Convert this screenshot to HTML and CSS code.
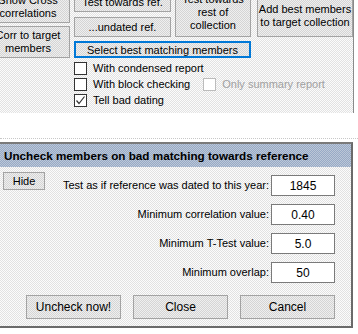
FILE: index.html
```html
<!DOCTYPE html>
<html lang="en">

<head>
    <meta charset="UTF-8">
    <title>Uncheck members</title>
    <link rel="stylesheet" href="styles.css">
</head>

<body>
<div class="top">
  <div class="colA">
    <button class="btn bCross">Show Cross<br>correlations</button>
    <button class="btn bCorr">Corr to target<br>members</button>
  </div>

  <div class="colB">
    <div class="rowB">
      <div class="stack">
        <button class="btn bRef">Test towards ref.</button>
        <button class="btn bUndated">...undated ref.</button>
      </div>
      <button class="btn bRest">Test towards<br>rest of<br>collection</button>
    </div>
    <button class="btn bSelect">Select best matching members</button>
    <label class="chk"><span class="box"></span>With condensed report</label>
    <div class="chkRow">
      <label class="chk"><span class="box"></span>With block checking</label>
      <label class="chk disabled"><span class="box"></span>Only summary report</label>
    </div>
    <label class="chk"><span class="box"><svg width="11" height="11" viewBox="0 0 11 11"><path d="M1.5 5.5 L4 8.5 L9.5 1.5" fill="none" stroke="#333" stroke-width="1.2"/></svg></span>Tell bad dating</label>
  </div>

  <div class="colC">
    <button class="btn bAdd">Add best members<br>to target collection</button>
  </div>
</div>

<div class="gap"></div>

<div class="dialog">
  <div class="titleBar">Uncheck members on bad matching towards reference</div>
  <div class="body">
    <div class="form">
      <button class="btn bHide">Hide</button>
      <span class="lbl">Test as if reference was dated to this year:</span>
      <input class="val" value="1845">

      <span></span>
      <span class="lbl">Minimum correlation value:</span>
      <input class="val" value="0.40">

      <span></span>
      <span class="lbl">Minimum T-Test value:</span>
      <input class="val" value="5.0">

      <span></span>
      <span class="lbl">Minimum overlap:</span>
      <input class="val" value="50">
    </div>

    <div class="actions">
      <button class="btn">Uncheck now!</button>
      <button class="btn">Close</button>
      <button class="btn">Cancel</button>
    </div>
  </div>
</div>
</body>
</html>
```

FILE: styles.css
```css
body {
    margin: 0;
    background: #fff;
    font-family: "Liberation Sans", Arial, sans-serif;
    font-size: 11px;
    color: #000;
    width: 358px;
    height: 334px;
    overflow: hidden;
}

/* windows style dither */
.top,
.body {
    background: repeating-conic-gradient(#e2e2e2 0 25%, #fcfcfc 0 50%) 0 0 / 2px 2px;
}

.btn {
    font-family: inherit;
    font-size: 11px;
    line-height: 13px;
    color: #000;
    border: 1px solid #a3a3a3;
    background: repeating-conic-gradient(#d4d4d4 0 25%, #efefef 0 50%) 0 0 / 2px 2px;
    padding: 0;
    margin: 0;
    text-align: center;
    display: block;
}

/* top panel */
.top {
    display: flex;
    height: 113px;
    overflow: hidden;
    border-right: 1px solid #8a8a8a;
    width: 353px;
}

.colA {
    margin-left: -14px;
    width: 86px;
    display: flex;
    flex-direction: column;
    gap: 3px;
}

.bCross {
    height: 32px;
    margin-top: -9px;
}

.bCorr {
    height: 32px;
}

.colB {
    margin-left: 4px;
    width: 177px;
    display: flex;
    flex-direction: column;
}

.rowB {
    display: flex;
    gap: 4px;
    margin-top: -12px;
}

.stack {
    width: 97px;
    display: flex;
    flex-direction: column;
    gap: 5px;
}

.bRef {
    height: 24px;
    padding-top: 4px;
}

.bUndated {
    height: 20px;
}

.bRest {
    width: 76px;
    height: 49px;
}

.bSelect {
    margin-top: 4px;
    height: 17px;
    border: 2px solid #0078d7;
    line-height: 12px;
}

.chk {
    display: flex;
    align-items: center;
    height: 16px;
    gap: 6px;
    white-space: nowrap;
}

.colB > .chk:first-of-type {
    margin-top: 2px;
}

.box {
    width: 11px;
    height: 11px;
    border: 1px solid #333;
    background: #fff;
    flex: none;
    display: flex;
}

.chkRow {
    display: flex;
    gap: 13px;
}

.disabled {
    color: #a0a0a0;
}

.disabled .box {
    border-color: #bcbcbc;
}

.colC {
    margin-left: 6px;
    width: 96px;
}

.bAdd {
    width: 96px;
    height: 48px;
    margin-top: -11px;
    padding-top: 6px;
}

/* white band */
.gap {
    height: 26px;
    border-bottom: 1px dotted #c8c8c8;
    box-sizing: border-box;
    margin-bottom: 3px;
}

/* dialog */
.dialog {
    width: 353px;
    border-top: 2px solid #7a7a7a;
    border-right: 2px solid #6a6a6a;
    border-bottom: 2px solid #6a6a6a;
    box-sizing: border-box;
}

.titleBar {
    height: 23px;
    line-height: 23px;
    padding-left: 4px;
    font-weight: bold;
    font-size: 11.7px;
    background: repeating-conic-gradient(#97aac6 0 25%, #bcc7d7 0 50%) 0 0 / 2px 2px;
    white-space: nowrap;
}

.body {
    padding: 5px 0 7px 3px;
}

.form {
    display: grid;
    grid-template-columns: 42px 1fr 64px;
    column-gap: 3px;
    grid-auto-rows: 25px;
    row-gap: 4px;
    align-items: center;
    margin-right: 16px;
}

.bHide {
    height: 18px;
    align-self: start;
}

.lbl {
    text-align: right;
    white-space: nowrap;
    margin-right: -1px;
}

.val {
    width: 64px;
    height: 21px;
    box-sizing: border-box;
    border: 1px solid #7a7a7a;
    background: #fff;
    text-align: center;
    font-family: inherit;
    font-size: 12px;
    padding: 0;
    margin-top: 3px;
    align-self: start;
}

.actions {
    display: flex;
    gap: 12px;
    margin-top: 11px;
    padding-left: 23px;
}

.actions .btn {
    width: 95px;
    height: 24px;
    font-size: 12px;
}
```
